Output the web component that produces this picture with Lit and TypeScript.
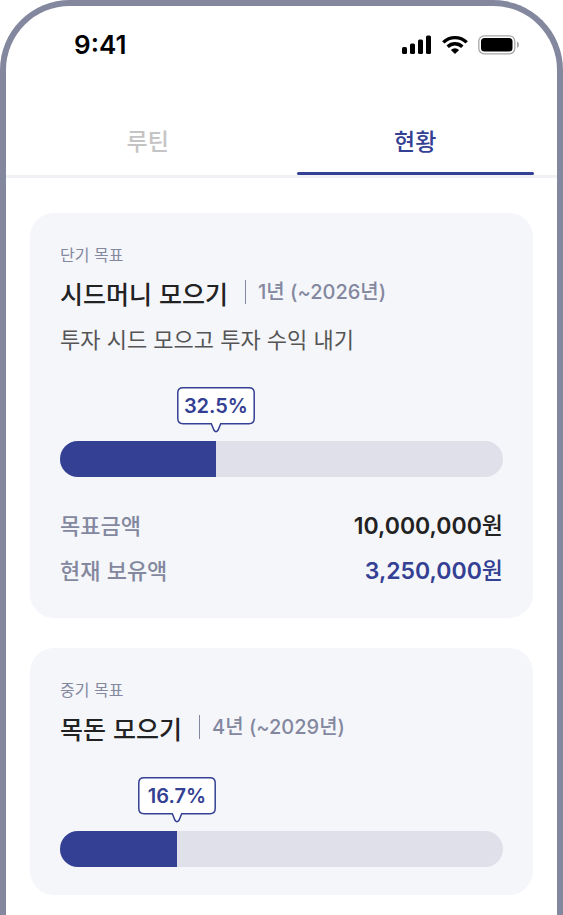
import { LitElement, html, css, svg, nothing } from "lit";
import { customElement, property, state } from "lit/decorators.js";
import { classMap } from "lit/directives/class-map.js";
import { styleMap } from "lit/directives/style-map.js";

interface Goal {
  term: string;
  title: string;
  period: [string, string];
  note?: string;
  percent: string;
  fill: number;
  target?: string;
  saved?: string;
}

const GOALS: Goal[] = [
  {
    term: "단기 목표",
    title: "시드머니 모으기",
    period: ["1", " (~2026"],
    note: "투자 시드 모으고 투자 수익 내기",
    percent: "32.5%",
    fill: 35.2,
    target: "10,000,000",
    saved: "3,250,000",
  },
  {
    term: "중기 목표",
    title: "목돈 모으기",
    period: ["4", " (~2029"],
    percent: "16.7%",
    fill: 26.4,
  },
];

@customElement("goal-card")
export class GoalCard extends LitElement {
  @property({ attribute: false }) goal!: Goal;

  static styles = css`
    :host {
      display: block;
    }
    .card {
      background: #f5f6fa;
      border-radius: 24px;
      padding: 30px 30px 28px;
    }
    .term,
    .note,
    .title,
    .amounts,
    .amount-name,
    .amount-value {
      margin: 0;
    }
    .term {
      font-size: 16px;
      line-height: 22px;
      color: #84889f;
    }
    .heading {
      display: flex;
      align-items: flex-start;
      margin-top: 12px;
    }
    .title {
      font-size: 25px;
      font-weight: 500;
      line-height: 32px;
      color: #222222;
    }
    .divider {
      width: 1px;
      height: 24px;
      margin: 3px 12px 0 17px;
      background: #84889f;
    }
    .period {
      font-family: Inter, "Noto Sans CJK KR", sans-serif;
      font-size: 20px;
      font-weight: 500;
      line-height: 30px;
      color: #84889f;
    }
    .note {
      margin-top: 13px;
      font-size: 22px;
      line-height: 32px;
      color: #555555;
    }
    .meter {
      margin-top: 33px;
      padding-top: 54px;
      position: relative;
    }
    .bubble {
      position: absolute;
      top: 0;
      width: 78px;
      height: 46px;
      transform: translateX(-50%);
    }
    .bubble-shape {
      position: absolute;
      inset: 0;
    }
    .bubble-text {
      position: relative;
      display: block;
      font: 600 20px/38px Inter, sans-serif;
      text-align: center;
      color: #334093;
    }
    .track {
      height: 36px;
      border-radius: 18px;
      overflow: hidden;
      background: #e0e0ea;
    }
    .fill {
      height: 100%;
      background: #334093;
    }
    .amounts {
      display: grid;
      gap: 13px;
      padding: 32px 0 4px;
    }
    .amount {
      display: flex;
      align-items: baseline;
      justify-content: space-between;
      height: 32px;
      line-height: 30px;
    }
    .amount-name {
      font-size: 22px;
      font-weight: 500;
      color: #84889f;
    }
    .amount-value {
      font-family: Inter, "Noto Sans CJK KR", sans-serif;
      font-size: 23px;
      font-weight: 600;
      color: #222222;
    }
    .unit {
      font-weight: 500;
    }
    .saved {
      color: #334093;
    }
  `;

  private amount(name: string, value: string, saved: boolean) {
    return html`<div class="amount">
      <dt class="amount-name">${name}</dt>
      <dd class=${classMap({ "amount-value": true, saved })}>${value}<span class="unit">원</span></dd>
    </div>`;
  }

  render() {
    const g = this.goal;
    return html`<article class="card">
      <p class="term">${g.term}</p>
      <div class="heading">
        <h2 class="title">${g.title}</h2>
        <span class="divider"></span>
        <span class="period">${g.period[0]}년${g.period[1]}년)</span>
      </div>
      ${g.note ? html`<p class="note">${g.note}</p>` : nothing}
      <div class="meter">
        <div class="bubble" style=${styleMap({ left: `${g.fill}%` })}>
          <svg class="bubble-shape" width="78" height="46" viewBox="0 0 78 46" aria-hidden="true">
            <path
              d="M6 .8H72Q77.2 .8 77.2 6V31.500Q77.200 36.700 72 36.700H43.700L41 43.300Q39 46 37 43.300L34.300 36.700H6Q.8 36.700 .8 31.500V6Q.8 .8 6 .8Z"
              fill="#fff"
              stroke="#334093"
              stroke-width="1.500"
            />
          </svg>
          <span class="bubble-text">${g.percent}</span>
        </div>
        <div class="track" role="progressbar" aria-label=${g.title} aria-valuetext=${g.percent}>
          <div class="fill" style=${styleMap({ width: `${g.fill}%` })}></div>
        </div>
      </div>
      ${g.target && g.saved
        ? html`<dl class="amounts">
            ${this.amount("목표금액", g.target, false)} ${this.amount("현재 보유액", g.saved, true)}
          </dl>`
        : nothing}
    </article>`;
  }
}

const signalIcon = svg`<svg width="30" height="20" viewBox="0 0 30 20" aria-hidden="true">
  <rect x="0" y="12" width="5" height="7" rx="1.500" />
  <rect x="8" y="8.500" width="5" height="10.500" rx="1.500" />
  <rect x="16" y="4.500" width="5" height="14.500" rx="1.500" />
  <rect x="24" y=".5" width="5" height="18.500" rx="1.500" />
</svg>`;

const wifiIcon = svg`<svg width="26" height="20" viewBox="0 0 26 20" aria-hidden="true">
  <g fill="none" stroke="#000" stroke-width="3.400">
    <path d="M1.300 7.400A16.700 16.700 0 0 1 24.700 7.400" />
    <path d="M5.700 11.800A10.400 10.400 0 0 1 20.300 11.800" />
  </g>
  <path d="M13 19L8.900 14.900A5.900 5.900 0 0 1 17.100 14.900Z" />
</svg>`;

const batteryIcon = svg`<svg width="42" height="20" viewBox="0 0 42 20" aria-hidden="true">
  <rect x=".8" y=".8" width="36" height="18" rx="5.500" fill="none" stroke="#a6a6a6" stroke-width="1.300" />
  <rect x="3" y="3" width="31.500" height="13.500" rx="3.500" />
  <path d="M39 6.500Q41 7.500 41 9.800T39 13Z" fill="#a6a6a6" />
</svg>`;

@customElement("app-root")
export class AppRoot extends LitElement {
  @state() private active = 1;

  static styles = css`
    :host {
      display: block;
      height: 100vh;
      overflow: hidden;
      background: #ffffff;
      font-family: "Noto Sans CJK KR", sans-serif;
    }
    .phone {
      box-sizing: border-box;
      min-height: 100vh;
      border: 6px solid #84889f;
      border-bottom: 0;
      border-radius: 70px 70px 0 0;
    }
    .status {
      display: flex;
      align-items: center;
      justify-content: space-between;
      padding: 24px 37px 0 68px;
    }
    .time {
      font: 600 26px/30px Inter, sans-serif;
      color: #000000;
    }
    .icons {
      display: flex;
      align-items: center;
      gap: 10px;
    }
    .tabs {
      display: grid;
      grid-template-columns: 1fr 1fr;
      gap: 30px;
      margin-top: 50px;
      padding: 0 23px;
      border-bottom: 3px solid #f1f2f5;
    }
    .tab {
      border: 0;
      padding: 13px 0 0;
      background: none;
      font: 500 23px/34px "Noto Sans CJK KR", sans-serif;
      color: #c4c4c4;
      cursor: pointer;
    }
    .tab::after {
      content: "";
      display: block;
      height: 3px;
      margin-top: 15px;
      border-radius: 2px;
    }
    .active {
      color: #334093;
    }
    .active::after {
      background: #334093;
    }
    .list {
      display: grid;
      gap: 30px;
      padding: 35px 24px 20px;
    }
  `;

  render() {
    return html`<main class="phone" lang="ko">
      <div class="status">
        <span class="time">9:41</span>
        <div class="icons">${signalIcon}${wifiIcon}${batteryIcon}</div>
      </div>
      <div class="tabs" role="tablist">
        ${["루틴", "현황"].map(
          (name, i) => html`<button
            class=${classMap({ tab: true, active: i === this.active })}
            role="tab"
            aria-selected=${i === this.active ? "true" : "false"}
            @click=${() => (this.active = i)}
          >
            ${name}
          </button>`,
        )}
      </div>
      <section class="list">${GOALS.map((goal) => html`<goal-card .goal=${goal}></goal-card>`)}</section>
    </main>`;
  }
}
